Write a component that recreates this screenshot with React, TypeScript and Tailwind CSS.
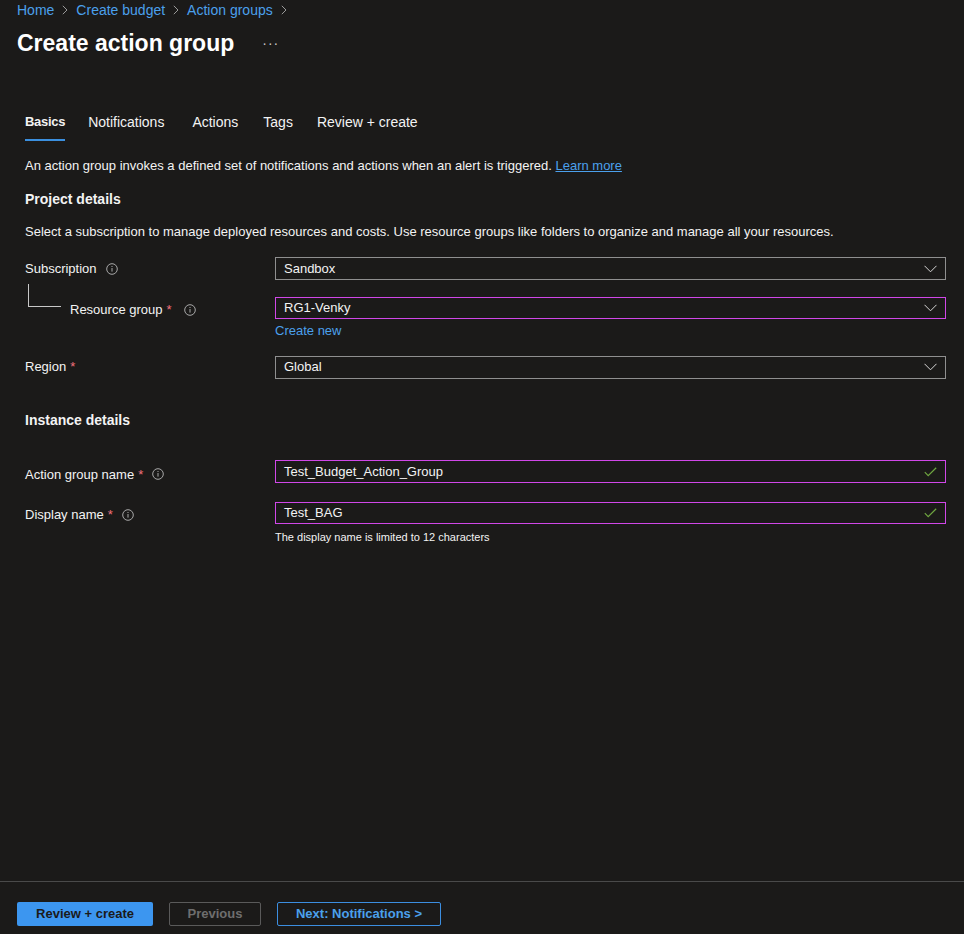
import React from "react";

const font = { fontFamily: '"Segoe UI", "Liberation Sans", Arial, sans-serif' };

function Chevron() {
  return (
    <svg width="13" height="8" viewBox="0 0 13 8" className="shrink-0">
      <path d="M0.5 0.8 L6.5 6.8 L12.5 0.8" fill="none" stroke="#d6d6d6" strokeWidth="1" />
    </svg>
  );
}

function Check() {
  return (
    <svg width="13" height="10" viewBox="0 0 13 10" className="shrink-0">
      <path d="M0.8 5.2 L4.2 8.6 L12.2 0.8" fill="none" stroke="#6fa640" strokeWidth="1.2" />
    </svg>
  );
}

function Info() {
  return (
    <svg width="12" height="12" viewBox="0 0 12 12" className="shrink-0">
      <circle cx="6" cy="6" r="5.3" fill="none" stroke="#a8a8a8" strokeWidth="1" />
      <rect x="5.5" y="5" width="1" height="3.6" fill="#a8a8a8" />
      <rect x="5.5" y="3" width="1" height="1" fill="#a8a8a8" />
    </svg>
  );
}

function BreadChevron() {
  return (
    <svg width="6" height="10" viewBox="0 0 6 10" className="mx-[8px]">
      <path d="M0.8 0.8 L5 5 L0.8 9.2" fill="none" stroke="#9a9a9a" strokeWidth="1" />
    </svg>
  );
}

function Field({ value, kind, focus }: { value: string; kind: "select" | "text"; focus?: boolean }) {
  return (
    <div
      className={`flex h-[23px] flex-1 items-center justify-between border pl-[8px] pr-[8px] text-[13px] text-[#f3f3f3] ${
        focus ? "border-[#d047e8]" : "border-[#8f8f8f]"
      }`}
    >
      <span>{value}</span>
      {kind === "select" ? <Chevron /> : <Check />}
    </div>
  );
}

function Label({ text, required, info, gap = 8 }: { text: string; required?: boolean; info?: boolean; gap?: number }) {
  return (
    <div className="flex items-center text-[13px] text-[#f3f3f3]">
      <span>{text}</span>
      {required && <span className="ml-[4px] text-[#f1707b]">*</span>}
      {info && (
        <span className={gap === 12 ? "ml-[12px]" : "ml-[9px]"}>
          <Info />
        </span>
      )}
    </div>
  );
}

export default function App() {
  return (
    <div style={font} className="flex min-h-[934px] flex-col bg-[#1b1a19] text-[#f3f3f3]">
      <div className="flex-1">
        {/* Breadcrumb */}
        <div className="flex h-[20px] items-center pl-[17px] text-[14px] text-[#4ba0ec]">
          <span>Home</span>
          <BreadChevron />
          <span>Create budget</span>
          <BreadChevron />
          <span>Action groups</span>
          <BreadChevron />
        </div>
        {/* Title */}
        <div className="mt-[7px] flex h-[32px] items-center pl-[17px]">
          <h1 className="text-[23px] font-semibold text-white">Create action group</h1>
          <span className="ml-[28px] text-[14px] tracking-[1px] text-[#c8c8c8]">···</span>
        </div>

        {/* Tabs */}
        <div className="mt-[51px] flex pl-[25px] text-[14px] text-[#f3f3f3]">
          <div className="flex flex-col items-stretch">
            <span className="text-[13px] font-semibold leading-[24px] tracking-[-0.3px]">Basics</span>
            <div className="mt-[5px] h-[2px] bg-[#3b8fde]" />
          </div>
          <span className="ml-[23px] leading-[24px]">Notifications</span>
          <span className="ml-[28px] leading-[24px]">Actions</span>
          <span className="ml-[25px] leading-[24px]">Tags</span>
          <span className="ml-[24px] leading-[24px]">Review + create</span>
        </div>

        <div className="pl-[25px] pr-[18px]">
          <p className="mt-[15px] text-[13px] leading-[20px]">
            An action group invokes a defined set of notifications and actions when an alert is triggered.{" "}
            <span className="text-[#4ba0ec] underline">Learn more</span>
          </p>
          <p className="mt-[13px] text-[14px] font-semibold leading-[20px]">Project details</p>
          <p className="mt-[13px] text-[13px] leading-[20px]">
            Select a subscription to manage deployed resources and costs. Use resource groups like folders to organize and manage all your resources.
          </p>

          {/* Subscription */}
          <div className="mt-[15px] flex items-center">
            <div className="w-[250px]">
              <Label text="Subscription" info />
            </div>
            <Field value="Sandbox" kind="select" />
          </div>

          {/* Resource group */}
          <div className="flex">
            <div className="flex w-[250px]">
              <div className="ml-[3px] mt-[4px] h-[23px] w-[33px] border-b border-l border-[#c8c8c8]" />
              <div className="ml-[9px] mt-[20px]">
                <Label text="Resource group" required info gap={12} />
              </div>
            </div>
            <div className="mt-[17px] flex flex-1 flex-col">
              <Field value="RG1-Venky" kind="select" focus />
              <span className="mt-[2px] text-[13px] leading-[20px] text-[#4ba0ec]">Create new</span>
            </div>
          </div>

          {/* Region */}
          <div className="mt-[15px] flex items-center">
            <div className="w-[250px]">
              <Label text="Region" required />
            </div>
            <Field value="Global" kind="select" />
          </div>

          <p className="mt-[31px] text-[14px] font-semibold leading-[20px]">Instance details</p>

          {/* Action group name */}
          <div className="mt-[30px] flex items-center">
            <div className="w-[250px] pt-[5px]">
              <Label text="Action group name" required info />
            </div>
            <Field value="Test_Budget_Action_Group" kind="text" focus />
          </div>

          {/* Display name */}
          <div className="mt-[18px] flex">
            <div className="flex h-[23px] w-[250px] items-center pt-[3px]">
              <Label text="Display name" required info />
            </div>
            <div className="flex flex-1 flex-col">
              <Field value="Test_BAG" kind="text" focus />
              <span className="mt-[3px] text-[11px] leading-[20px] text-[#f3f3f3]">
                The display name is limited to 12 characters
              </span>
            </div>
          </div>
        </div>
      </div>

      {/* Footer */}
      <div className="flex h-[53px] items-start border-t border-[#4a4a4a] pl-[17px] pt-[20px]">
        <button className="h-[24px] w-[136px] rounded-[2px] bg-[#3c96f0] text-[13px] font-semibold text-[#1b1a19]">
          Review + create
        </button>
        <button className="ml-[16px] h-[24px] w-[92px] rounded-[2px] border border-[#5a5a5a] text-[13px] font-semibold text-[#6e6e6e]">
          Previous
        </button>
        <button className="ml-[16px] h-[24px] w-[164px] rounded-[2px] border border-[#3c8ee0] text-[13px] font-semibold text-[#4ba0ec]">
          Next: Notifications &gt;
        </button>
      </div>
    </div>
  );
}
